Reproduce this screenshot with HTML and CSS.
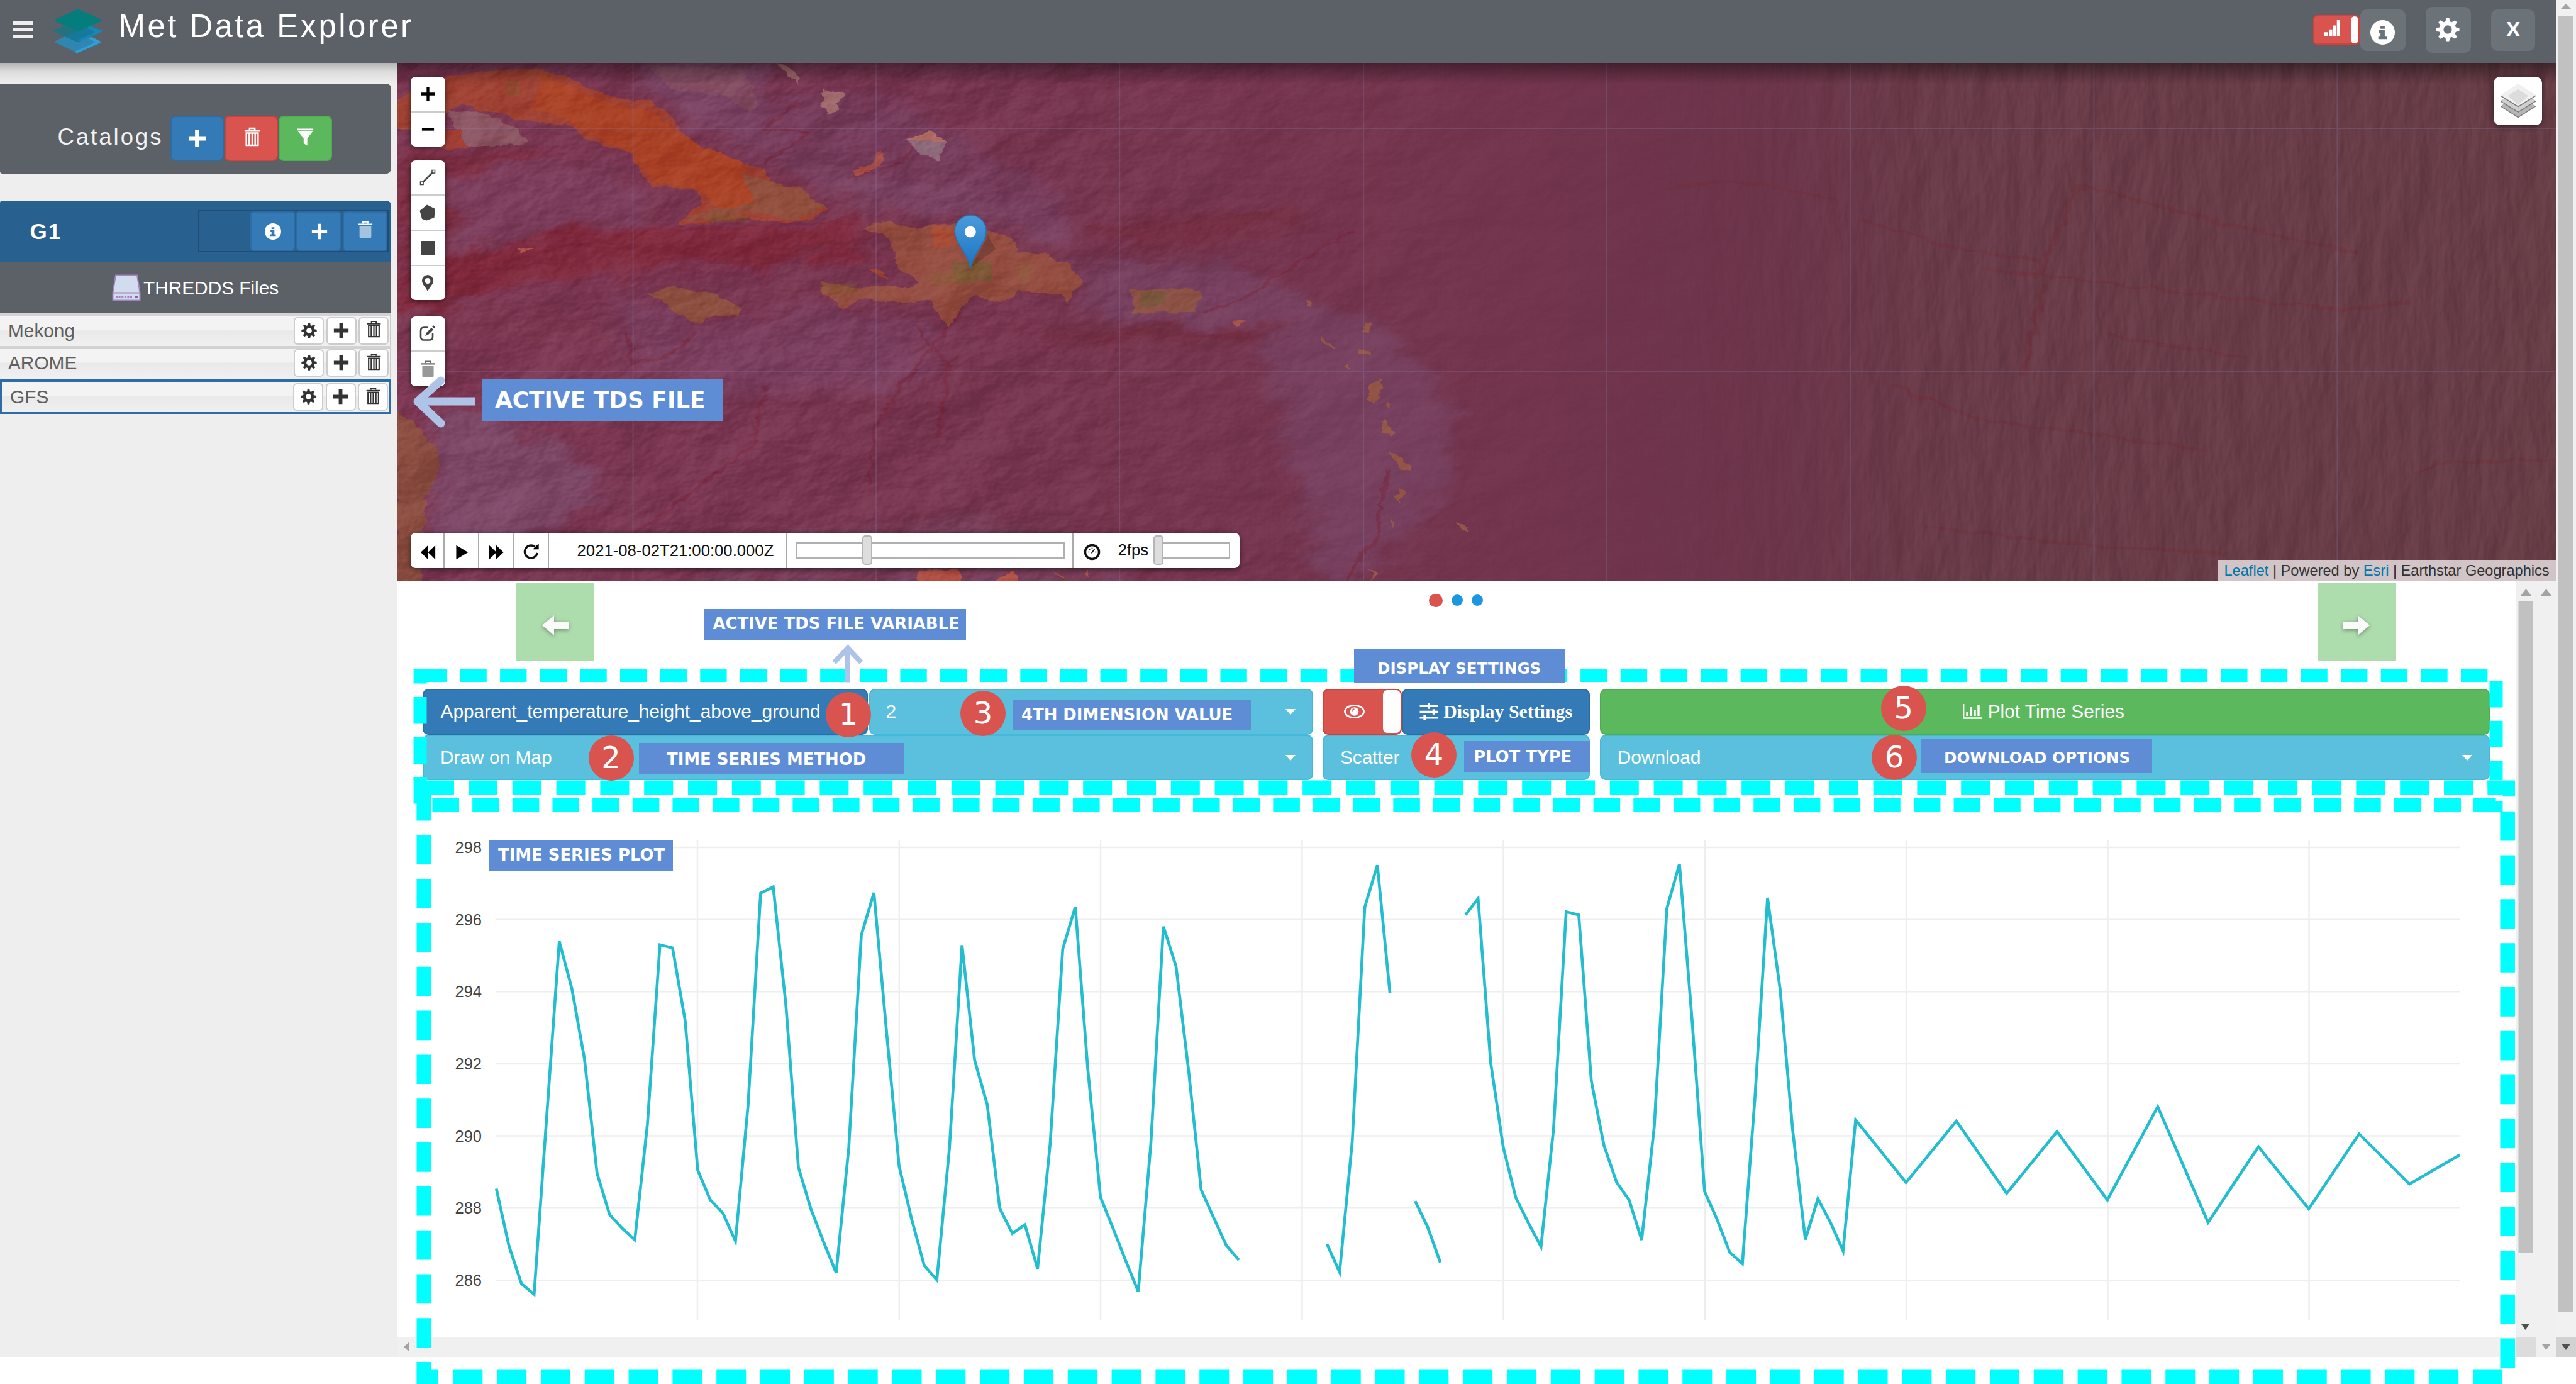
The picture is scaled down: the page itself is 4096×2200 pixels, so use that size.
FILE: index.html
```html
<!DOCTYPE html>
<html lang="en">
<head>
<meta charset="utf-8">
<title>Met Data Explorer</title>
<link rel="stylesheet" href="styles.css">
</head>
<body>
<svg class="defs" width="0" height="0">
  <symbol id="plus" viewBox="0 0 30 30"><path d="M11.500 1h7v10.500h10.500v7H18.500V29h-7V18.500H1v-7h10.500z"/></symbol>
  <symbol id="trash" viewBox="0 0 30 34"><path fill="none" stroke="currentColor" stroke-width="2.600" d="M10.500 5V2h9v3M2 6.500h26M5 10h20v21H5zM10 10v20M15 10v20M20 10v20"/></symbol>
  <symbol id="bin" viewBox="0 0 30 34"><path fill="none" stroke="currentColor" stroke-width="2.600" d="M10.500 5V2h9v3M2 6.500h26"/><path d="M4 10h22v20q0 2-2 2H6q-2 0-2-2z" opacity=".55"/></symbol>
  <symbol id="gear" viewBox="-20 -20 40 40"><circle r="10.500" fill="none" stroke="currentColor" stroke-width="7"/><g><path id="tooth" d="M-4.200-12L-2.500-19.500h5L4.200-12z"/><use href="#tooth" transform="rotate(45)"/><use href="#tooth" transform="rotate(90)"/><use href="#tooth" transform="rotate(135)"/><use href="#tooth" transform="rotate(180)"/><use href="#tooth" transform="rotate(225)"/><use href="#tooth" transform="rotate(270)"/><use href="#tooth" transform="rotate(315)"/></g></symbol>
  <symbol id="info" viewBox="-20 -20 40 40"><path fill-rule="evenodd" d="M0-20a20 20 0 1 0 0 40a20 20 0 1 0 0-40zM-3.500-10.500h7v4.500h-7zM-6-3.500H3.500V7H7v4H-7V7h3.500V.500H-6z"/></symbol>
</svg>

<div class="page">
  <div class="app">
    <header class="topbar">
      <svg class="burger" viewBox="0 0 32 28"><path d="M0 2.500h31.500M0 13.500h31.500M0 24h31.500" stroke="#eee" stroke-width="5"/></svg>
      <svg class="logo" viewBox="0 0 350 310">
        <path d="M12 225l155-72 162 72q12 5 0 12L175 302q-8 4-16 0L20 236q-12-5-8-11z" fill="#2f86b0"/>
        <path d="M325 225l12 6-160 72q-10 5-18 1l-8-8 130-58q14-6 0-14l-40-20 30-8z" fill="#2f9fd8"/>
        <path d="M6 148l165-65 170 66q6 4 0 9L180 228q-10 4-18 0L4 158q-8-5 2-10z" fill="#15799a"/>
        <path d="M6 148l80-30 80 38-80 36L4 158q-8-5 2-10z" fill="#25727f"/>
        <path d="M250 118l91 33q6 3 0 7L190 224l-20-6 110-50q14-7 0-14l-40-18z" fill="#1688b8"/>
        <path d="M16 74l148-70q8-4 17 0l156 72q6 4 0 9L184 150q-10 6-20 1L18 88q-6-6-2-14z" fill="#047d7c"/>
      </svg>
      <h1>Met Data Explorer</h1>
      <div class="tools">
        <div class="signal"><svg viewBox="0 0 38 46" preserveAspectRatio="none"><path d="M0 46v-12h8v12zM11 46V26h8v20zM20 46V15h8v31zM30 46V0h8v46z" fill="#fff"/></svg><i></i></div>
        <div class="tool info"><svg><use href="#info"/></svg></div>
        <div class="tool gear"><svg><use href="#gear"/></svg></div>
        <div class="tool close">X</div>
      </div>
    </header>

    <div class="main">
      <aside>
        <section class="catalogs">
          <span>Catalogs</span>
          <button class="b blue"><svg><use href="#plus"/></svg></button>
          <button class="b red"><svg><use href="#trash"/></svg></button>
          <button class="b green"><svg viewBox="0 0 30 30"><path d="M1 0h28v3H1zM2 5h26L18.500 17v13L12 26V17z"/></svg></button>
        </section>
        <section class="group">
          <div class="group-head"><b>G1</b>
            <div class="group-btns">
              <button><svg><use href="#info"/></svg></button>
              <button><svg><use href="#plus"/></svg></button>
              <button><svg class="tr"><use href="#bin"/></svg></button>
            </div>
          </div>
          <div class="thredds">
            <svg viewBox="0 0 46 43"><path d="M6 1.500h34L44.500 29v12.500h-43V29z" fill="#d2dcef" stroke="#a184bd" stroke-width="2"/><path d="M2 29.500h42" stroke="#a184bd" stroke-width="2"/><path d="M6 36h26" stroke="#a77fbb" stroke-width="4" stroke-dasharray="3 1.600"/><path d="M37 36h4" stroke="#8d5fa5" stroke-width="4"/></svg>
            <span>THREDDS Files</span>
          </div>
          <div class="file"><span>Mekong</span><i><svg><use href="#gear"/></svg></i><i><svg><use href="#plus"/></svg></i><i><svg class="tr"><use href="#trash"/></svg></i></div>
          <div class="file"><span>AROME</span><i><svg><use href="#gear"/></svg></i><i><svg><use href="#plus"/></svg></i><i><svg class="tr"><use href="#trash"/></svg></i></div>
          <div class="file active"><span>GFS</span><i><svg><use href="#gear"/></svg></i><i><svg><use href="#plus"/></svg></i><i><svg class="tr"><use href="#trash"/></svg></i></div>
        </section>
      </aside>

      <div class="content">
        <div class="map">
          <svg class="terrain" viewBox="631 100 3433 824" preserveAspectRatio="none">
            <defs>
              <linearGradient id="sea"><stop offset="0" stop-color="#7c3753"/><stop offset=".45" stop-color="#75354e"/><stop offset=".62" stop-color="#6d344a"/><stop offset=".72" stop-color="#693b48"/><stop offset="1" stop-color="#673d46"/></linearGradient>
              <filter id="rough" x="-10%" y="-10%" width="120%" height="120%"><feTurbulence type="fractalNoise" baseFrequency=".035" numOctaves="4" seed="4" result="n"/><feDisplacementMap in="SourceGraphic" in2="n" scale="20" xChannelSelector="R" yChannelSelector="G"/></filter>
              <filter id="ragged" x="-20%" y="-20%" width="140%" height="140%"><feGaussianBlur stdDeviation="18 14" result="b"/><feTurbulence type="fractalNoise" baseFrequency=".012 .016" numOctaves="5" seed="9" result="n"/><feDisplacementMap in="b" in2="n" scale="100" xChannelSelector="R" yChannelSelector="G"/></filter>
              <filter id="relief" x="0" y="0" width="100%" height="100%" color-interpolation-filters="sRGB"><feTurbulence type="fractalNoise" baseFrequency=".008 .012" numOctaves="5" seed="12" result="n"/><feDiffuseLighting in="n" surfaceScale="20" lighting-color="#fff" diffuseConstant="1"><feDistantLight azimuth="215" elevation="30"/></feDiffuseLighting></filter>
              <filter id="ridges" x="0" y="0" width="100%" height="100%" color-interpolation-filters="sRGB"><feTurbulence type="fractalNoise" baseFrequency=".025 .009" numOctaves="4" seed="2" result="n"/><feDiffuseLighting in="n" surfaceScale="9" lighting-color="#fff" diffuseConstant="1"><feDistantLight azimuth="210" elevation="30"/></feDiffuseLighting></filter>
              <linearGradient id="fadeL"><stop offset="0" stop-color="#fff"/><stop offset=".4" stop-color="#fff"/><stop offset=".8" stop-color="#333"/><stop offset="1" stop-color="#000"/></linearGradient>
              <linearGradient id="fadeR"><stop offset="0" stop-color="#000"/><stop offset=".35" stop-color="#fff"/></linearGradient>
              <mask id="mL"><rect x="631" y="100" width="2300" height="824" fill="url(#fadeL)"/></mask>
              <mask id="mR"><rect x="2600" y="100" width="1464" height="824" fill="url(#fadeR)"/></mask>
              <linearGradient id="hdr" x2="0" y2="1"><stop offset="0" stop-opacity=".4"/><stop offset="1" stop-opacity="0"/></linearGradient>
              <linearGradient id="pin" x2="0" y2="1"><stop offset="0" stop-color="#4a9bd9"/><stop offset="1" stop-color="#1b73c4"/></linearGradient>
            </defs>
            <rect x="631" y="100" width="3433" height="824" fill="url(#sea)"/>
            <g transform="matrix(.9167 0 0 .5413 629.7 95.8)">
              <g filter="url(#ragged)">
                <path d="M0 280L220 260 420 400 480 480 300 520 100 640 0 680z" fill="#7f2f42"/>
                <path d="M90 320L200 300 330 300 440 420 460 470 300 490 100 580z" fill="#7b3c5b"/>
                <path d="M0 640L300 500 480 490 700 480 800 460 820 560 640 600 420 620 200 650 0 790z" fill="#812738" opacity=".8"/>
                <path d="M400 0H640L660 200 600 210 740 330 1000 360 1180 480 1160 540 1060 480 860 450 770 400 640 290 530 200 440 110z" fill="#7a4262"/>
                <path d="M640 140L720 100 880 130 960 200 1060 300 1150 400 1160 500 1050 400 960 350 760 330 620 250z" fill="#763b5a"/>
                <path d="M1180 600L1400 590 1500 640 1568 700 1700 760 1820 980 1830 1240 1700 1500 1600 1500 1530 1000 1480 780 1200 760z" fill="#773f5e"/>
                <path d="M1180 480L1568 440 1568 490 1300 560z" fill="#742e42"/>
                <path d="M1000 780L1200 800 1400 790 1560 770 1500 830 1200 830z" fill="#742e43"/>
                <path d="M380 700L560 780 740 720 960 790 900 950 600 1000 400 880z" fill="#7a3e5d"/>
                <path d="M60 1020L180 1050 300 1160 360 1260 240 1400 60 1500z" fill="#7d4666"/>
                <path d="M0 740L240 720 380 800 300 840 100 830 0 860z" fill="#7d3951"/>
                <path d="M640 1400L1000 1340 1200 1400 1300 1540H500z" fill="#783d59"/>
              </g>
              <g fill="none" stroke="#7b2336" stroke-width="7" filter="url(#rough)" opacity=".4">
                <path d="M0 660C160 620 260 540 420 510S650 500 800 460"/><path d="M340 1460C420 1400 500 1280 620 1130L640 960"/><path d="M820 1240L830 1080 900 900 980 740" /><path d="M900 780L960 900 940 1100"/><path d="M400 800L410 890 470 870 520 800"/><path d="M1660 500L1568 590 1480 690 1400 740"/><path d="M1640 1540L1700 1400 1720 1200"/><path d="M700 120L640 200 720 210 640 300"/><path d="M780 350L880 300 900 240"/>
              </g>
              <g fill="none" stroke="#712f38" stroke-width="8" filter="url(#rough)" opacity=".4" transform="translate(1478 -177) scale(1.469 1.129)">
                <path d="M500 490C560 460 620 480 700 525M720 570L830 640 930 680M870 700L1100 760 1290 805 1370 790M980 480L1150 580 1310 660M1010 870L1180 930M760 1000L860 1090 1000 1130 1130 1170M800 1370L1000 1420 1160 1440M1380 1230L1400 1205 1544 1195M930 730L980 480M915 980L940 740"/>
              </g>
              <g filter="url(#rough)">
                <path d="M0 120L60 60 160 30 250 25 300 50 370 110 440 120 480 170 500 220 560 290 640 320 660 370 700 380 750 435 720 460 680 480 600 465 540 480 490 480 530 420 520 380 440 370 410 280 340 240 300 190 200 170 110 130 90 150 60 200 0 200z" fill="#9e4030"/>
                <path d="M250 40L360 120 440 150 500 230 600 300 620 370 640 440 560 440 530 380 450 360 410 280 300 180 240 140z" fill="#aa4328"/>
                <path d="M600 330L700 380 745 430 690 470 600 440 560 470 500 470 540 440 620 420z" fill="#904e3b"/>
                <path d="M90 150L140 145 210 200 230 240 170 255 120 250 100 200z" fill="#8c5664"/>
                <path d="M70 210L110 200 120 255 90 268 70 240z" fill="#a03c30"/>
                <path d="M440 20L600 20 630 130 610 150 560 100 480 90z" fill="#824c60"/>
                <path d="M660 10L690 30 700 70 670 30zM740 85L775 95 765 150 745 160z" fill="#a06a6c"/>
                <path d="M885 235L925 205 955 240 940 295 905 275z" fill="#8d6878"/>
                <path d="M885 235L925 205 955 240 925 235z" fill="#b06c64"/>
                <path d="M845 265L840 310 800 340 790 325 820 305z" fill="#a84e46"/>
                <path d="M440 685L480 668 550 680 570 705 600 730 590 750 560 750 525 772 490 750 465 710z" fill="#8d4f3f"/>
                <path d="M810 490L850 475 900 495 950 480 1000 490 1070 520 1080 560 1130 570 1170 600 1192 655 1170 690 1165 715 1155 690 1080 675 1060 700 1025 705 1010 690 985 715 960 785 945 760 925 705 880 712 810 702 780 728 735 685 740 650 800 668 900 665 910 650 870 610 865 560 850 520z" fill="#944e40"/>
                <path d="M930 485L975 490 980 540 930 550z" fill="#a64833"/>
                <path d="M965 590H1035V650H965z" fill="#7c5635"/>
                <path d="M820 605L860 640 830 630z" fill="#a04436"/>
                <path d="M1275 675L1380 670 1397 690 1385 735 1350 742 1277 742z" fill="#8c5144"/>
                <path d="M1290 680H1335V720H1290z" fill="#78553a"/>
                <path d="M0 1030L30 1060 75 1150 70 1220 50 1300 45 1540H0z" fill="#8b4d41"/>
                <path d="M905 1510L930 1490 980 1500 985 1545H905zM1050 1520L1070 1500 1085 1540H1045z" fill="#b55346"/>
                <path d="M1140 1497L1160 1518 1150 1516zM1195 1495L1202 1520 1192 1505zM210 550L235 557 215 566zM1450 770L1475 765 1455 780z" fill="#a85547"/>
              </g>
              <g fill="#7f5b2f" opacity=".35"><path d="M190 60h25v45h-25zM540 450h70v25h-70zM740 655h60v30h-60zM930 625h60v35h-60zM1080 600h20v50h-20z"/></g>
            </g>
            <g transform="matrix(1.3463 0 0 .6112 1985 0)" filter="url(#rough)" fill="#945646">
              <path d="M133 840l12 5-2 20-8-4zM134 905l9 6-3 14-7-5zM70 778l6 8-2 18-5-6zM88 875l12 28-4 6-10-22zM116 945l6 8-2 12-5-8zM140 1005l16-22 9 28-9 8-5 30-8-14zM163 1045l6 6-5 8zM158 1090l9 14v32l-8-10zM168 1175l12 18 10 35-10-3zM178 1265l9 14-6 32-5-16zM168 1345l5 14-4 20zM249 1352l10 20-3 14-8-12zM143 1480l5 10-6 20z"/>
            </g>
            <g class="blend" mask="url(#mL)" opacity=".2"><rect x="631" y="100" width="2300" height="824" filter="url(#relief)"/></g>
            <g class="blend" mask="url(#mR)" opacity=".13"><rect x="2600" y="100" width="1464" height="824" filter="url(#ridges)"/></g>
            <path d="M631 204H4064M631 591H4064M1006.500 100V924M1393 100V924M1780 100V924M2168 100V924M2554 100V924M2942 100V924M3329 100V924M3716 100V924" stroke="#8a84b0" stroke-opacity=".25" stroke-width="2"/>
            <rect x="631" y="100" width="3433" height="34" fill="url(#hdr)"/>
            <path d="M1543 426l40-30-12-22z" opacity=".18"/>
            <path d="M1543 426C1538 400 1518 388 1518 367a25 25 0 0 1 50 0C1568 388 1548 400 1543 426z" fill="url(#pin)" stroke="#2b70ad" stroke-width="1.500"/>
            <circle cx="1542.700" cy="368.500" r="9" fill="#fff"/>
          </svg>

          <div class="ctl zoomctl"><span><svg viewBox="0 0 24 24"><path d="M12 1v22M1 12h22" stroke="#000" stroke-width="4.500"/></svg></span><span><svg viewBox="0 0 24 24"><path d="M2 12h20" stroke="#000" stroke-width="4.500"/></svg></span></div>
          <div class="ctl drawctl">
            <span><svg viewBox="0 0 26 26"><path d="M5 21L21 5" stroke="#444" stroke-width="2.600"/><path d="M1.500 20h4.500v4.500H1.500zM20 1.500h4.500V6H20z" fill="#fff" stroke="#444" stroke-width="1.600"/></svg></span>
            <span><svg viewBox="0 0 26 26"><path d="M12 .500L25 7l-1.500 14-12.500 4.500L4 23 .500 10z" fill="#444"/></svg></span>
            <span><svg viewBox="0 0 26 26"><path d="M2 2h22v22H2z" fill="#444"/></svg></span>
            <span><svg viewBox="0 0 26 26"><path fill-rule="evenodd" d="M13 0a9 9 0 0 1 9 9c0 6-5 9-9 17C9 18 4 15 4 9a9 9 0 0 1 9-9zM13 5a4.500 4.500 0 1 0 0 9 4.500 4.500 0 1 0 0-9z" fill="#444"/></svg></span>
          </div>
          <div class="ctl editctl">
            <span><svg viewBox="0 0 26 26"><path d="M14 3.500H7Q2 3.500 2 8.500v10q0 5 5 5h9q5 0 5-5V13" fill="none" stroke="#444" stroke-width="2.600"/><path d="M9 17l2-5 8-8 3 3-8 8z" fill="#444"/><path d="M22 0l3 3-2 2-3-3z" fill="#444"/></svg></span>
            <span class="dim"><svg viewBox="0 0 30 34"><use href="#bin"/></svg></span>
          </div>
          <div class="layers"><svg viewBox="0 0 56 62" preserveAspectRatio="none"><path d="M0 41L28 20 56 41 28 62z" fill="#b5b5b5"/><path d="M0 41L28 61.500 56 41" fill="none" stroke="#777" stroke-width="1.500"/><path d="M0 31L28 10 56 31 28 51z" fill="#cfcfcf"/><path d="M0 32L28 52 56 32" fill="none" stroke="#777" stroke-width="1.500"/><path d="M0 21L28 0 56 21 28 41z" fill="#f0f0f0"/><path d="M12 22L28 10 44 22 28 39z" fill="#dcdcdc"/><path d="M0 22L28 42 56 22" fill="none" stroke="#777" stroke-width="1.800"/></svg></div>
          <div class="player">
            <span class="k"><svg viewBox="0 0 28 26"><path d="M13.500 0v26L0 13zM27 0v26L13.500 13z"/></svg></span>
            <span class="k"><svg viewBox="0 0 28 26"><path d="M4 0v26L26 13z"/></svg></span>
            <span class="k"><svg viewBox="0 0 28 26"><path d="M1 0v26l13.500-13zM14 0v26L27.500 13z"/></svg></span>
            <span class="k"><svg viewBox="0 0 28 28"><path d="M24 16A10.800 10.800 0 1 1 20 5.500" fill="none" stroke="#111" stroke-width="3.600"/><path d="M26.500 0v10H16z"/></svg></span>
            <span class="date">2021-08-02T21:00:00.000Z</span>
            <span class="trackbox"><i class="track"><i class="knob"></i></i></span>
            <span class="fps"><svg viewBox="0 0 28 28"><circle cx="14" cy="14" r="11.500" fill="none" stroke="#111" stroke-width="3.600"/><path d="M13 16l5-7M7.500 14h2M19 14h2M9.500 9.500l1 1M14 7v2" stroke="#111" stroke-width="1.800"/></svg><em>2fps</em><i class="track"><i class="knob"></i></i></span>
          </div>
          <div class="attribution"><a>Leaflet</a> | Powered by <a>Esri</a> | Earthstar Geographics</div>
        </div>

        <div class="lower">
          <div class="pane">
            <div class="carousel">
              <div class="nav"><svg viewBox="0 0 42 32"><path d="M0 16L19 0v10h23v12H19v10z" fill="#fafafa"/></svg></div>
              <div class="dots"><i class="on"></i><i></i><i></i></div>
              <div class="nav"><svg viewBox="0 0 42 32"><path d="M42 16L23 0v10H0v12h23v10z" fill="#fafafa"/></svg></div>
            </div>
            <div class="controls">
              <div class="split"><div class="btn primary">Apparent_temperature_height_above_ground</div><div class="btn sky">2<i class="caret"></i></div></div>
              <div class="split narrow">
                <div class="btn danger"><svg viewBox="0 0 36 24"><ellipse cx="18" cy="12" rx="15.500" ry="10" fill="none" stroke="#fff" stroke-width="2.800"/><circle cx="18" cy="12" r="7" fill="#fff"/><path d="M14 12a4 4 0 0 1 4-4" fill="none" stroke="#d9534f" stroke-width="1.600"/></svg><i></i></div>
                <div class="btn primary display"><svg viewBox="0 0 30 28"><path d="M0 4.500h30M0 14h30M0 23.500h30" stroke="#fff" stroke-width="3.600"/><path d="M15 0v9M23 9.500v9M8 19v9" stroke="#fff" stroke-width="4"/></svg>Display Settings</div>
              </div>
              <div class="btn success"><svg viewBox="0 0 31 24"><path d="M1.200 0v22.500H31" fill="none" stroke="#fff" stroke-width="2.400"/><path d="M7 19v-6M13 19V5M19 19V9M25 19V2" stroke="#fff" stroke-width="3.400"/></svg>Plot Time Series</div>
              <div class="btn sky">Draw on Map<i class="caret"></i></div>
              <div class="btn sky scatter">Scatter</div>
              <div class="btn sky">Download<i class="caret"></i></div>
            </div>
            <svg class="chart" viewBox="631 1240 3368 886">
              <path class="grid" d="M789 1346.900H3911M789 1461.700H3911M789 1576.300H3911M789 1691H3911M789 1805.600H3911M789 1920.200H3911M789 2035.200H3911M1109 1336V2098M1429.700 1336V2098M1750 1336V2098M2070.400 1336V2098M2390.500 1336V2098M2711 1336V2098M3031 1336V2098M3351.500 1336V2098M3671.500 1336V2098"/>
              <g class="ticks"><text x="766" y="1356">298</text><text x="766" y="1470.700">296</text><text x="766" y="1585.300">294</text><text x="766" y="1700">292</text><text x="766" y="1814.600">290</text><text x="766" y="1929.200">288</text><text x="766" y="2044.200">286</text></g>
              <g class="series" transform="matrix(20.013 0 0 .6173 789.200 1232.100)">
                <polyline points="0,1065 1,1212 2,1310 3,1337 4,880 5,428 6,550 7,730 8,1025 9,1132 10,1167 11,1197 12,900 13,437 14,445 15,632 16,1017 17,1094 18,1128 19,1200 20,850 21,304 22,288 23,590 24,1010 25,1118 26,1202 27,1282 28,960 29,412 30,303 31,660 32,1007 33,1144 34,1263 35,1300 36,960 37,438 38,734 39,848 40,1116 41,1180 42,1158 43,1271 44,950 45,448 46,339 47,760 48,1087 49,1167 50,1250 51,1330 52,950 53,390 54,492 55,760 56,1068 57,1140 58,1211 59,1249"/>
                <polyline points="66,1208 67,1280 68,945 69,340 70,232 71,562"/>
                <polyline points="73,1097 74,1164 75,1255"/>
                <polyline points="77,360 78,318 79,740 80,958 81,1088 82,1153 83,1214 84,910 85,352 86,360 87,788 88,953 89,1048 90,1094 91,1197 92,905 93,343 94,229 95,630 96,1072 97,1145 98,1229 99,1258 100,830 101,316 102,552 103,915 104,1196 105,1091 106,1152 107,1225 108,888 112,1049 116,891 120,1077 124,918 128,1094 132,854 136,1152 140,957 144,1117 148,924 152,1053 156,978"/>
              </g>
            </svg>
            <div class="hscroll"><svg viewBox="0 0 10 16"><path d="M9 0v16L0 8z" fill="#a3a3a3"/></svg></div>
          </div>
          <div class="bars">
            <svg viewBox="3999.500 924 64.500 1233" width="64.500" height="1233">
              <path d="M3999.500 924h64.500v1233h-64.500z" fill="#f0f0f0"/>
              <path d="M4004 956h23.500v1035H4004z" fill="#c1c1c1"/>
              <path d="M4016 936l8.500 11h-17zM4048 936l8.500 11h-17z" fill="#a3a3a3"/>
              <path d="M3999.500 2126h32.500v31h-32.500z" fill="#dcdcdc"/>
              <path d="M4015 2114l6.500-9h-13z" fill="#505050"/><path d="M4048 2146l6.500-9h-13z" fill="#a3a3a3"/>
            </svg>
          </div>
        </div>
      </div>
    </div>
  </div>
  <div class="vscroll">
    <svg viewBox="0 0 32 2157" width="32" height="2157"><path d="M0 0h32v2157H0z" fill="#f1f1f1"/><path d="M16 6l9 9H7z" fill="#a3a3a3"/><path d="M4 25h24v2061H4z" fill="#c1c1c1"/><path d="M0 2126h32v31H0z" fill="#d2d2d2"/><path d="M16 2146l6.500-9h-13z" fill="#505050"/></svg>
  </div>

  <svg class="marks" viewBox="0 0 4096 2200">
    <g fill="none" stroke="#0ff">
      <path stroke-width="21" stroke-dasharray="42.300 21.330" d="M731.500 1073.500H3957"/>
      <path stroke-width="21" stroke-dasharray="42.400 21.300" d="M668 1108V1240M3969 1082V1240"/>
      <path stroke-width="23" stroke-dasharray="46 23.800" d="M745 1252H3940"/>
      <path stroke-width="21.500" stroke-dasharray="42.500 21.160" d="M687.500 1279.200H3930"/>
      <path stroke-width="23" stroke-dasharray="46.700 23.120" d="M674 1327.300V2150"/>
      <path stroke-width="23.500" stroke-dasharray="46.700 23.120" d="M3987.200 1289.700V2176"/>
      <path stroke-width="24" stroke-dasharray="47 22.820" d="M720.300 2188.500H3985"/>
    </g>
    <path fill="#0ff" d="M657.600 1063h52.800v21h-31.700v2.500h-21.100zM657.600 1235h21v5.500h43.400v23h-36.600v41h-23v-27h-4.800zM662.400 2165h23v11.600H697V2200h-34.600zM3955 1240.500h44v25.700h-19.500v24h-46.500v-21.600h22.500z"/>
    <path fill="#fff" d="M3968.500 1266h11.500v7h-11.500z"/>
    <path fill="#fff" d="M3955 1263.500h24.500v5.100H3955z"/>
    <path d="M756 638H666" stroke="#afc3e8" stroke-width="13"/><path d="M701 605l-37 33 37 35" fill="none" stroke="#afc3e8" stroke-width="13" stroke-linecap="round" stroke-linejoin="round"/>
    <path d="M1348 1084.500V1034" stroke="#afc3e8" stroke-width="8"/><path d="M1326.500 1053L1348 1030l21.500 23" fill="none" stroke="#afc3e8" stroke-width="8"/>
  </svg>
  <div class="label big" style="left:766px;top:602px;width:384px;height:67.500px;padding:16px 0 0 21px">ACTIVE TDS FILE</div>
  <div class="label" style="left:1119.500px;top:967.500px;width:416px;height:49px;padding:11.500px 0 0 14px">ACTIVE TDS FILE VARIABLE</div>
  <div class="label small" style="left:2153px;top:1031.500px;width:335px;height:54px;padding:19px 0 0 37px">DISPLAY SETTINGS</div>
  <div class="label" style="left:1610px;top:1111.500px;width:378.500px;height:49px;padding:12px 0 0 14px">4TH DIMENSION VALUE</div>
  <div class="label" style="left:1016px;top:1181px;width:420.500px;height:49px;padding:14px 0 0 44px">TIME SERIES METHOD</div>
  <div class="label" style="left:2328px;top:1178px;width:199.500px;height:49px;padding:13px 0 0 15px">PLOT TYPE</div>
  <div class="label small" style="left:3054px;top:1174px;width:368px;height:54px;padding:18.500px 0 0 37px">DOWNLOAD OPTIONS</div>
  <div class="label" style="left:778px;top:1335px;width:291.500px;height:49px;padding:11.500px 0 0 14px">TIME SERIES PLOT</div>
  <div class="num" style="left:1313px;top:1100.400px">1</div>
  <div class="num" style="left:935.600px;top:1168.700px">2</div>
  <div class="num" style="left:1527px;top:1097.500px">3</div>
  <div class="num" style="left:2244px;top:1163.600px">4</div>
  <div class="num" style="left:2990.700px;top:1090px">5</div>
  <div class="num" style="left:2976px;top:1167.500px">6</div>
</div>
</body>
</html>
```
FILE: styles.css
```css
* { box-sizing: border-box; }
html, body { margin: 0; background: #fff; overflow: hidden; }
body { font-family: "Liberation Sans", Arial, sans-serif; }
button { font: inherit; padding: 0; margin: 0; }
i, em { font-style: normal; }
svg { display: block; }
.defs { position: absolute; }
.page { position: relative; width: 4096px; height: 2200px; display: flex; overflow: hidden; }
.app { width: 4064px; height: 2157px; display: flex; flex-direction: column; }

.topbar { height: 100.400px; flex: none; background: #5b6167; display: flex; align-items: flex-start; position: relative; z-index: 2; color: #fff; }
.burger { width: 32px; height: 28px; margin: 34px 0 0 21px; }
.logo { width: 81px; height: 71px; margin: 13.500px 0 0 31px; }
.topbar h1 { margin: 13px 0 0 23.500px; font-size: 51px; line-height: 58px; font-weight: 400; letter-spacing: 3.400px; }
.tools { margin-left: auto; display: flex; align-items: flex-start; padding-right: 33px; }
.signal { width: 74px; height: 47.500px; margin: 23.500px 1.500px 0 0; background: #d9534f; border: 2px solid #d43f3a; border-radius: 6px; display: flex; align-items: center; justify-content: space-between; padding-left: 16px; }
.signal svg { width: 25px; height: 26px; margin-top: -4px; }
.signal i { width: 12px; height: 43.500px; background: #fff; border-radius: 6px; }
.tool { width: 72px; height: 66px; margin-top: 15px; border-radius: 10px; background: #6b7278; display: flex; align-items: center; justify-content: center; fill: #fff; color: #fff; }
.tool.info svg { width: 39px; height: 39px; margin: 6px 2px 0 0; }
.tool.gear { height: 73px; margin: 10.500px 32px 0 32px; }
.tool.gear svg { width: 38px; height: 38px; margin-right: 2px; }
.tool.close { width: 70px; font-weight: 700; font-size: 34px; padding-bottom: 3px; }

.main { flex: 1; display: flex; min-height: 0; }
aside { width: 630.500px; background: linear-gradient(#b4b4b4, #dcdcdc 14px, #eee 32px); padding-top: 32.300px; }
.catalogs { width: 622px; height: 143px; background: #5b6167; border-radius: 0 8px 8px 4px; display: flex; padding: 51px 0 0 91.500px; gap: 1.500px; }
.catalogs span { color: #f2f2f2; font-size: 36.500px; letter-spacing: 3px; line-height: 68px; width: 178px; }
.b { width: 84.500px; height: 72.500px; border-radius: 8px; border: 2px solid; display: flex; align-items: center; justify-content: center; fill: #fff; color: #fff; }
.b svg { width: 29px; height: 30px; }
.b.red svg { width: 28px; height: 34px; margin: -4px 0 0 4px; }
.b.green svg { width: 27px; height: 30px; margin-top: -3px; }
.blue { background: #337ab7; border-color: #2e6da4; }
.red { background: #d9534f; border-color: #d43f3a; }
.green { background: #5cb85c; border-color: #4cae4c; }

.group { width: 622px; margin-top: 43px; }
.group-head { height: 98.500px; background: #286090; border-radius: 4px 8px 0 0; display: flex; align-items: center; justify-content: space-between; padding: 0 4.500px 0 47.500px; color: #fff; font-size: 35px; letter-spacing: 2px; }
.group-btns { width: 302.500px; height: 67px; border: 2px solid #204d74; display: flex; justify-content: flex-end; gap: 2.500px; align-items: center; }
.group-btns button { width: 71px; height: 63px; background: #337ab7; border: 2px solid #2e6da4; border-radius: 5px; display: flex; align-items: center; justify-content: center; fill: #fff; color: #fff; }
.group-btns svg { width: 26px; height: 26px; margin-left: 2px; }
.group-btns svg.tr { height: 29px; margin-top: -4px; }
.thredds { height: 81px; background: #5b6167; color: #fff; display: flex; align-items: center; padding-left: 178px; font-size: 29.800px; }
.thredds svg { width: 46px; height: 43px; margin-right: 4px; }
.file { height: 51.500px; border-top: 4px solid #d2d2d2; border-right: 2px solid #ccc; background: linear-gradient(#f3f3f3 45%, #e9e9e9 50%, #f0f0f0); display: flex; align-items: center; padding: 0 2px 0 13px; color: #606060; font-size: 29.800px; }
.file span { flex: 1; line-height: 44px; }
.file i { width: 48px; height: 44px; margin-left: 3.500px; background: #fff; border: 2px solid #ccc; border-radius: 6px; display: flex; align-items: center; justify-content: center; fill: #333; color: #333; }
.file i svg { width: 25px; height: 25px; margin-top: -1px; }
.file i svg.tr { height: 29px; margin-top: -4px; }
.file.active { height: 55px; margin-top: 2px; border: 3.500px solid #2f6ca6; border-top-width: 4px; }

.content { flex: 1; display: flex; flex-direction: column; }
.map { height: 823.600px; flex: none; position: relative; overflow: hidden; }
.terrain { width: 3433.500px; height: 824px; isolation: isolate; }
.blend { mix-blend-mode: soft-light; }
.ctl { position: absolute; left: 22px; width: 55.500px; background: #fff; border-radius: 8px; box-shadow: 0 2px 10px rgba(0,0,0,.55); display: flex; flex-direction: column; }
.ctl span { flex: 1; display: flex; align-items: center; justify-content: center; border-bottom: 2px solid #ccc; }
.ctl span:last-child { border: 0; }
.ctl svg { width: 26px; height: 26px; }
.zoomctl svg { width: 23px; height: 23px; }
.zoomctl { top: 21.800px; height: 111px; }
.drawctl { top: 154.500px; height: 222px; }
.editctl { top: 402.500px; height: 111px; }
.editctl .dim { fill: #444; color: #666; }
.editctl .dim svg { height: 28px; width: 25px; }
.layers { position: absolute; left: 3334.500px; top: 21.500px; width: 77px; height: 77px; border-radius: 10px; background: #fff; box-shadow: 0 2px 10px rgba(0,0,0,.5); display: flex; align-items: center; justify-content: center; }
.layers svg { width: 56px; height: 54px; }
.player { position: absolute; left: 22px; top: 746.800px; width: 1318.500px; height: 55.500px; background: #fff; border-radius: 8px; box-shadow: 0 2px 10px rgba(0,0,0,.6); display: flex; }
.player > span { border-right: 2px solid #aaa; display: flex; align-items: center; }
.player .k { width: 55.200px; justify-content: center; padding-top: 6px; }
.player .k:first-child { width: 54.500px; padding-left: 4px; }
.player .k svg { width: 24px; height: 24px; }
.player .k:nth-child(4) svg { width: 26px; height: 26px; margin: -2px 0 0 3px; }
.player .date { width: 379px; padding-left: 45px; font-size: 25.700px; color: #111; padding-top: 1px; }
.trackbox { width: 455px; padding-left: 14px; }
.track { display: block; width: 427px; height: 26px; border: 2px solid #b0b0b0; background: #fff; }
.knob { display: block; width: 16px; height: 47px; margin: -13px 0 0 103px; background: #ddd; border: 2px solid #b5b5b5; border-radius: 5px; }
.player .fps { flex: 1; border: 0; padding-left: 16px; font-size: 25.700px; color: #111; }
.fps svg { width: 27px; height: 27px; margin: 5px 28px 0 0; }
.fps em { width: 60px; }
.fps .track { width: 118px; }
.fps .knob { margin-left: -6px; }
.attribution { position: absolute; right: 0; bottom: 0; height: 34px; width: 537.500px; padding-left: 10px; background: rgba(255,255,255,.7); font-size: 23.600px; line-height: 34px; color: #333; white-space: nowrap; }
.attribution a { color: #0078a8; }

.lower { flex: 1; display: flex; min-height: 0; }
.pane { width: 3369px; display: flex; flex-direction: column; border-left: 1px solid #ddd; background: #fff; }
.carousel { height: 171px; flex: none; display: flex; justify-content: space-between; padding: 2.300px 191px 0 189.500px; }
.nav { width: 123.500px; height: 124px; background: #addcad; display: flex; align-items: center; justify-content: center; padding-top: 11px; }
.nav svg { width: 42px; height: 32px; filter: drop-shadow(0 2px 3px rgba(0,0,0,.35)); }
.dots { display: flex; gap: 14px; align-items: center; height: 56px; }
.dots i { width: 18px; height: 18px; border-radius: 50%; background: #1c96e0; }
.dots i.on { width: 21.500px; height: 21.500px; background: #d9534f; }
.controls { display: grid; grid-template-columns: 1415.600px 425.500px 1415.200px; grid-template-rows: 72.700px 72.700px; column-gap: 15.300px; padding-left: 40.500px; flex: none; }
.split { display: flex; gap: 2px; }
.narrow { gap: 0; }
.btn { border-radius: 9px; border: 2px solid; color: #fff; font-size: 29.850px; display: flex; align-items: center; padding-left: 26px; white-space: nowrap; position: relative; }
.split .btn { flex: 1; padding-left: 25px; }
.split .btn.primary { padding-left: 26.500px; }
.primary { background: #337ab7; border-color: #2e6da4; }
.sky { background: #5bc0de; border-color: #46b8da; }
.success { background: #5cb85c; border-color: #4cae4c; justify-content: center; padding: 0 4px 0 0; }
.success svg { width: 31px; height: 24px; margin-right: 9px; }
.split .danger { flex: none; width: 126px; background: #d9534f; border-color: #d43f3a; padding: 0; justify-content: space-between; }
.danger svg { width: 35px; height: 24px; margin-left: 31px; }
.danger i { width: 28px; height: 68px; background: #fff; border-radius: 7px; }
.split .primary.display { padding: 0; justify-content: center; font-family: "Liberation Serif", "Times New Roman", serif; font-weight: 700; }
.display svg { width: 30px; height: 27px; margin-right: 8px; }
.caret { margin-left: auto; margin-right: 26px; border: 8.500px solid transparent; border-top: 9px solid #fff; border-bottom: 0; }
.chart { width: 3368px; height: 886px; flex: none; margin-left: -1px; }
.grid { stroke: #eee; stroke-width: 2.500; }
.ticks { font-size: 25.500px; fill: #444; text-anchor: end; }
.series polyline { fill: none; stroke: #22bdcf; stroke-width: 4.600; vector-effect: non-scaling-stroke; }
.hscroll { flex: 1; background: #f0f0f0; padding: 7px 0 0 10px; }
.hscroll svg { width: 9px; height: 16px; }
.bars { width: 64.500px; }
.vscroll { width: 32px; }

.marks { position: absolute; left: 0; top: 0; width: 4096px; height: 2200px; z-index: 3; }
.label { position: absolute; z-index: 4; background: #5e8dd5; color: #fff; font: 700 25.900px/1 "DejaVu Sans", sans-serif; white-space: nowrap; }
.label.big { font-size: 35.900px; }
.label.small { font-size: 24.600px; }
.num { position: absolute; z-index: 5; width: 72px; height: 72px; border-radius: 50%; background: #d9534f; color: #fff; font: 48px/70px "DejaVu Sans", sans-serif; text-align: center; }
```
